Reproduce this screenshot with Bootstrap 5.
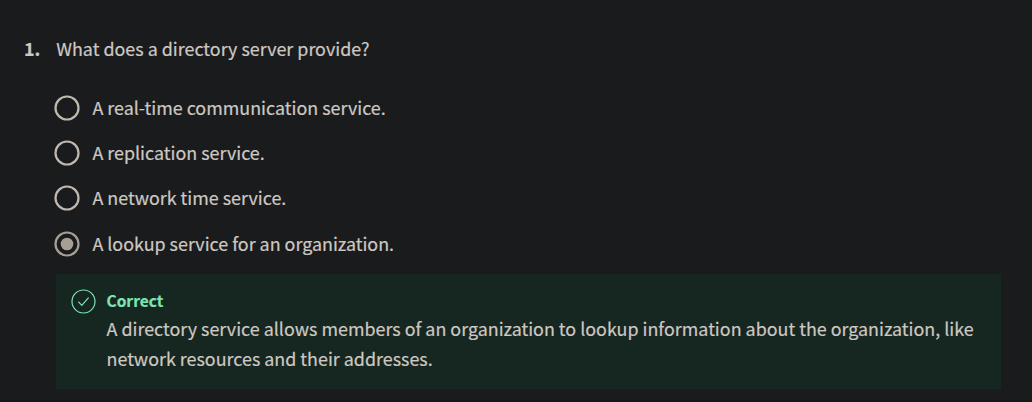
<!DOCTYPE html>
<html lang="en" data-bs-theme="dark">
<head>
<meta charset="utf-8">
<meta name="viewport" content="width=device-width, initial-scale=1">
<title>Directory services quiz</title>
<link href="https://cdn.jsdelivr.net/npm/bootstrap@5.3.0/dist/css/bootstrap.min.css" rel="stylesheet">
<style>
  body { background: #1a1b1d; color: #cdc8c2; font-family: "Noto Sans CJK JP", "Open Sans", sans-serif; font-size: 17.9px; line-height: 30px; overflow: hidden; -webkit-text-stroke: .2px; }
  .quiz { height: 402px; padding: 33px 31px 0 24px; border-bottom: 2px solid #161719; }
  .number { width: 32.3px; }
  .choices { margin: 29px 0 0 30px; }
  .choice { height: 45.2px; gap: 12.4px; }
  .choice svg { flex: none; margin-top: 1px; }
  .feedback { margin: 1.2px 0 0 32px; height: 115px; padding: 12px 16px 0 15px; gap: 10.5px; background: #162620; }
  .feedback svg { flex: none; margin-top: 1px; }
  .verdict { color: #7fe3b3; font-size: 15.5px; line-height: 28px; margin-bottom: -1px; }
</style>
</head>
<body>
<main class="quiz">
  <div class="d-flex">
    <div class="number fw-bold">1.</div>
    <div>What does a directory server provide?</div>
  </div>
  <div class="choices" role="radiogroup">
    <div class="choice d-flex" role="radio" aria-checked="false">
      <svg width="26" height="30" viewBox="0 0 26 30" fill="none" stroke="#bfb9b0" stroke-width="2.2"><circle cx="13" cy="15" r="11.5"/></svg>
      <span>A real-time communication service.</span>
    </div>
    <div class="choice d-flex" role="radio" aria-checked="false">
      <svg width="26" height="30" viewBox="0 0 26 30" fill="none" stroke="#bfb9b0" stroke-width="2.2"><circle cx="13" cy="15" r="11.5"/></svg>
      <span>A replication service.</span>
    </div>
    <div class="choice d-flex" role="radio" aria-checked="false">
      <svg width="26" height="30" viewBox="0 0 26 30" fill="none" stroke="#bfb9b0" stroke-width="2.2"><circle cx="13" cy="15" r="11.5"/></svg>
      <span>A network time service.</span>
    </div>
    <div class="choice d-flex" role="radio" aria-checked="true">
      <svg width="26" height="30" viewBox="0 0 26 30" fill="none" stroke="#a89f94" stroke-width="2.2"><circle cx="13" cy="15" r="11.5"/><circle cx="13" cy="15" r="6.3" fill="#a89f94" stroke="none"/></svg>
      <span>A lookup service for an organization.</span>
    </div>
  </div>
  <div class="feedback d-flex">
    <svg width="25" height="28" viewBox="0 0 25 28" fill="none" stroke="#7fe3b3" stroke-width="1.2"><circle cx="12.5" cy="14.5" r="11.5"/><path d="M7.3 14.6l3.5 3.7 6.8-7.6"/></svg>
    <div>
      <div class="verdict fw-bold">Correct</div>
      <div>A directory service allows members of an organization to lookup information about the organization, like network resources and their addresses.</div>
    </div>
  </div>
</main>
<script src="https://cdn.jsdelivr.net/npm/bootstrap@5.3.0/dist/js/bootstrap.bundle.min.js"></script>
</body>
</html>
